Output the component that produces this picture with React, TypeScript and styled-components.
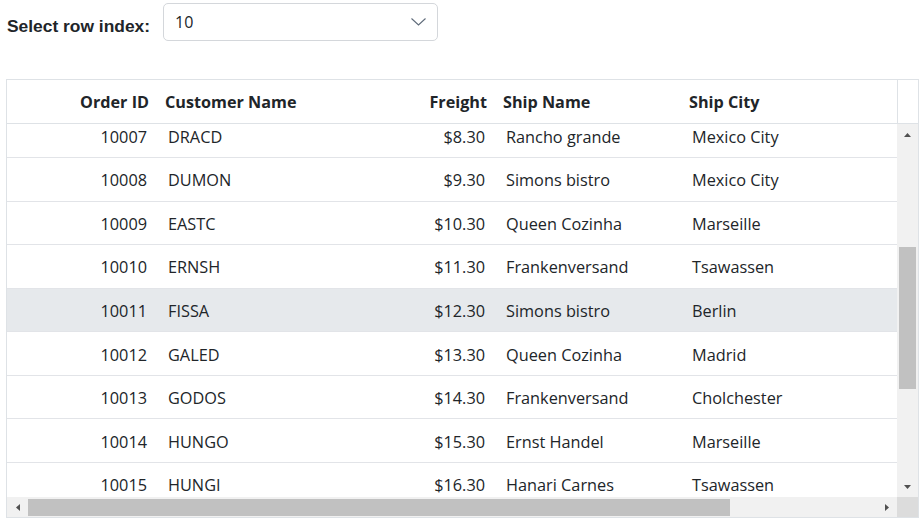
import React from "react";
import styled, { createGlobalStyle } from "styled-components";

const GlobalStyle = createGlobalStyle`
  html, body { margin: 0; padding: 0; background: #ffffff; }
  * { box-sizing: border-box; }
`;

const GRID_FONT = `"Open Sans", "Noto Sans", Arial, sans-serif`;

type Order = { id: number; customer: string; freight: string; ship: string; city: string };

const orders: Order[] = [
  { id: 10007, customer: "DRACD", freight: "$8.30", ship: "Rancho grande", city: "Mexico City" },
  { id: 10008, customer: "DUMON", freight: "$9.30", ship: "Simons bistro", city: "Mexico City" },
  { id: 10009, customer: "EASTC", freight: "$10.30", ship: "Queen Cozinha", city: "Marseille" },
  { id: 10010, customer: "ERNSH", freight: "$11.30", ship: "Frankenversand", city: "Tsawassen" },
  { id: 10011, customer: "FISSA", freight: "$12.30", ship: "Simons bistro", city: "Berlin" },
  { id: 10012, customer: "GALED", freight: "$13.30", ship: "Queen Cozinha", city: "Madrid" },
  { id: 10013, customer: "GODOS", freight: "$14.30", ship: "Frankenversand", city: "Cholchester" },
  { id: 10014, customer: "HUNGO", freight: "$15.30", ship: "Ernst Handel", city: "Marseille" },
  { id: 10015, customer: "HUNGI", freight: "$16.30", ship: "Hanari Carnes", city: "Tsawassen" },
];

const COLS = "150px 150px 188px 186px 1fr";

const Page = styled.div`
  padding: 3px 0 0 6px;
`;

const Toolbar = styled.div`
  display: flex;
  align-items: center;
  gap: 13px;
  padding-left: 1px;
  height: 38px;
`;

const Label = styled.label`
  font-family: "Liberation Sans", Arial, sans-serif;
  font-weight: 700;
  font-size: 17.4px;
  color: #212529;
  padding-top: 9px;
  white-space: nowrap;
`;

const Select = styled.div`
  width: 275px;
  height: 38px;
  border: 1px solid #d4d7db;
  border-radius: 5px;
  display: flex;
  align-items: center;
  justify-content: space-between;
  padding: 0 11px 0 11px;
  font-family: ${GRID_FONT};
  font-size: 16px;
  color: #212529;
`;

const GridBox = styled.div`
  margin-top: 38px;
  width: 913px;
  height: 439px;
  border: 1px solid #dee2e6;
  display: flex;
  flex-direction: column;
  font-family: ${GRID_FONT};
  color: #212529;
`;

const HeaderBar = styled.div`
  display: flex;
  height: 44px;
  border-bottom: 1px solid #dee2e6;
  flex: none;
`;

const HeaderCells = styled.div`
  width: 890px;
  display: grid;
  grid-template-columns: ${COLS};
`;

const HeaderCell = styled.div<{ $right?: boolean }>`
  display: flex;
  align-items: center;
  justify-content: ${(p) => (p.$right ? "flex-end" : "flex-start")};
  padding: 0 8px;
  font-weight: 700;
  font-size: 16.2px;
  white-space: nowrap;
  overflow: hidden;
`;

const HeaderPad = styled.div`
  flex: 1;
  border-left: 1px solid #dee2e6;
`;

const Body = styled.div`
  flex: 1;
  display: grid;
  grid-template-columns: 890px 1fr;
  grid-template-rows: 1fr 20px;
  min-height: 0;
`;

const Viewport = styled.div`
  overflow: hidden;
  position: relative;
`;

const Rows = styled.div<{ $offset: number }>`
  margin-top: ${(p) => -p.$offset}px;
`;

const Row = styled.div<{ $selected?: boolean }>`
  display: grid;
  grid-template-columns: ${COLS};
  height: 43.55px;
  border-bottom: 1px solid #e2e4e8;
  background: ${(p) => (p.$selected ? "#e6e9ec" : "#ffffff")};
`;

const Cell = styled.div<{ $right?: boolean }>`
  display: flex;
  align-items: center;
  justify-content: ${(p) => (p.$right ? "flex-end" : "flex-start")};
  padding: 2px 10px 0 11px;
  font-size: 16.3px;
  white-space: nowrap;
  overflow: hidden;
`;

const VBar = styled.div`
  background: #f1f1f1;
  display: flex;
  flex-direction: column;
  align-items: center;
`;

const HBar = styled.div`
  background: #f1f1f1;
  display: flex;
  align-items: center;
`;

const ArrowBox = styled.div<{ $vertical?: boolean }>`
  flex: none;
  width: ${(p) => (p.$vertical ? "100%" : "21px")};
  height: ${(p) => (p.$vertical ? "21px" : "100%")};
  display: flex;
  align-items: center;
  justify-content: center;
`;

const VThumb = styled.div<{ $top: number; $size: number }>`
  width: 17px;
  margin-top: ${(p) => p.$top}px;
  height: ${(p) => p.$size}px;
  background: #c1c1c1;
`;

const HThumb = styled.div<{ $left: number; $size: number }>`
  height: 17px;
  margin-left: ${(p) => p.$left}px;
  width: ${(p) => p.$size}px;
  background: #c1c1c1;
`;

const Spacer = styled.div`
  flex: 1;
`;

const Corner = styled.div`
  background: #dcdcdc;
`;

const Tri = ({ dir }: { dir: "up" | "down" | "left" | "right" }) => {
  const pts = {
    up: "0,4 7,4 3.5,0",
    down: "0,0 7,0 3.5,4",
    left: "4,0 4,7 0,3.5",
    right: "0,0 0,7 4,3.5",
  }[dir];
  const vertical = dir === "up" || dir === "down";
  return (
    <svg width={vertical ? 7 : 4} height={vertical ? 4 : 7} viewBox={vertical ? "0 0 7 4" : "0 0 4 7"}>
      <polygon points={pts} fill="#505050" />
    </svg>
  );
};

const Chevron = () => (
  <svg width="15" height="8" viewBox="0 0 15 8">
    <polyline points="0.5,0.5 7.5,7 14.5,0.5" fill="none" stroke="#5f6b7a" strokeWidth="1.1" />
  </svg>
);

export default function App() {
  return (
    <>
      <GlobalStyle />
      <Page>
        <Toolbar>
          <Label>Select row index:</Label>
          <Select>
            <span>10</span>
            <Chevron />
          </Select>
        </Toolbar>
        <GridBox>
          <HeaderBar>
            <HeaderCells>
              <HeaderCell $right>Order ID</HeaderCell>
              <HeaderCell>Customer Name</HeaderCell>
              <HeaderCell $right>Freight</HeaderCell>
              <HeaderCell>Ship Name</HeaderCell>
              <HeaderCell>Ship City</HeaderCell>
            </HeaderCells>
            <HeaderPad />
          </HeaderBar>
          <Body>
            <Viewport>
              <Rows $offset={9.5}>
                {orders.map((o) => (
                  <Row key={o.id} $selected={o.id === 10011}>
                    <Cell $right>{o.id}</Cell>
                    <Cell>{o.customer}</Cell>
                    <Cell $right>{o.freight}</Cell>
                    <Cell>{o.ship}</Cell>
                    <Cell>{o.city}</Cell>
                  </Row>
                ))}
              </Rows>
            </Viewport>
            <VBar>
              <ArrowBox $vertical>
                <Tri dir="up" />
              </ArrowBox>
              <VThumb $top={102} $size={142} />
              <Spacer />
              <ArrowBox $vertical>
                <Tri dir="down" />
              </ArrowBox>
            </VBar>
            <HBar>
              <ArrowBox>
                <Tri dir="left" />
              </ArrowBox>
              <HThumb $left={0} $size={702} />
              <Spacer />
              <ArrowBox>
                <Tri dir="right" />
              </ArrowBox>
            </HBar>
            <Corner />
          </Body>
        </GridBox>
      </Page>
    </>
  );
}
